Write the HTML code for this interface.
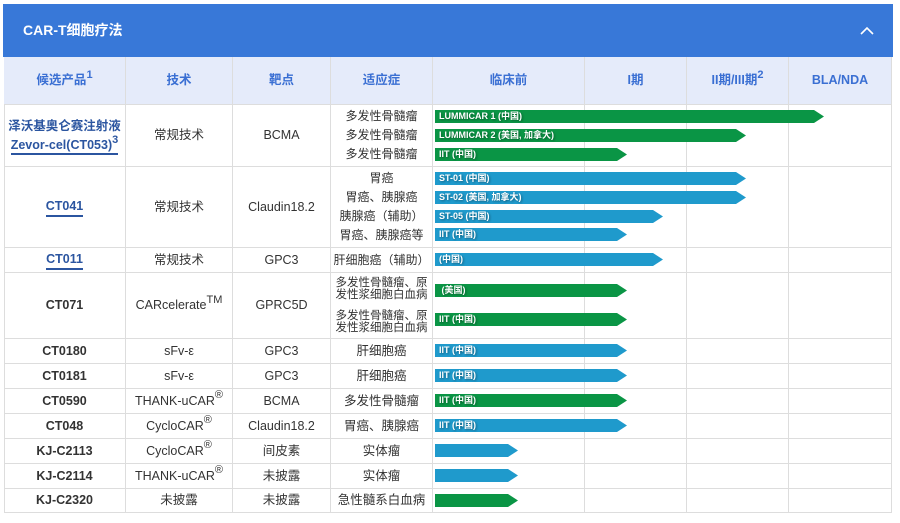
<!DOCTYPE html>
<html><head><meta charset="utf-8"><style>
*{margin:0;padding:0;box-sizing:border-box}
body{width:900px;height:523px;background:#fff;position:relative;overflow:hidden;font-family:"Liberation Sans","Noto Sans CJK SC",sans-serif;color:#333}
.hd{position:absolute;left:3px;top:4px;width:890px;height:53px;background:#3878d8;color:#fff;font-weight:bold;font-size:14px;line-height:53px;padding-left:20px}
.c{position:absolute;display:flex;align-items:center;justify-content:center;text-align:center;font-size:12.5px;border-right:1px solid #ddd;border-bottom:1px solid #ddd;line-height:1.5;white-space:nowrap}
.h{background:#e5ebfa;color:#3a6fd3;font-weight:bold;font-size:12.5px}
.b{font-weight:bold}
.u{color:#2b55a0;font-weight:bold;border-bottom:2px solid #2b55a0;padding-bottom:1px;line-height:16px}
sup{font-size:11px;position:relative;top:-6px;vertical-align:baseline;line-height:0}
.h sup,.u sup{font-weight:bold}
.bar{position:absolute;height:13px;color:#fff;font-size:9px;font-weight:bold;line-height:13px;padding-left:4px;white-space:nowrap;text-shadow:1px 1px 2px rgba(0,0,0,.4);clip-path:polygon(0 0,calc(100% - 10px) 0,100% 50%,calc(100% - 10px) 100%,0 100%)}
.g{background:#0a9545}.bl{background:#1f9acc}
.ind{font-size:12px;line-height:19px}
</style></head><body>
<div class="hd">CAR-T细胞疗法<svg style="position:absolute;right:19px;top:22px" width="14" height="9" viewBox="0 0 14 9"><path d="M1 8 L7 2 L13 8" fill="none" stroke="#fff" stroke-width="1.6"/></svg></div>
<div style="position:absolute;left:4px;top:57px;width:888px;height:456px;border-left:1px solid #ddd"></div>
<div class="c h" style="left:4px;top:57px;width:122px;height:48px">候选产品<sup>1</sup></div>
<div class="c h" style="left:126px;top:57px;width:107px;height:48px">技术</div>
<div class="c h" style="left:233px;top:57px;width:98px;height:48px">靶点</div>
<div class="c h" style="left:331px;top:57px;width:102px;height:48px">适应症</div>
<div class="c h" style="left:433px;top:57px;width:152px;height:48px">临床前</div>
<div class="c h" style="left:585px;top:57px;width:102px;height:48px">I期</div>
<div class="c h" style="left:687px;top:57px;width:102px;height:48px">II期/III期<sup>2</sup></div>
<div class="c h" style="left:789px;top:57px;width:103px;height:48px;border-right:1px solid #ddd">BLA/NDA</div>
<div id="rows"></div>
<script>
const rows=[
 [105,62,'<div style="color:#2b55a0;font-weight:bold;line-height:19px">泽沃基奥仑赛注射液<br><span class="u">Zevor-cel(CT053)<sup>3</sup></span></div>','常规技术','BCMA','<div class="ind">多发性骨髓瘤<br>多发性骨髓瘤<br>多发性骨髓瘤</div>'],
 [167,81,'<span class="u">CT041</span>','常规技术','Claudin18.2','<div class="ind">胃癌<br>胃癌、胰腺癌<br>胰腺癌（辅助）<br>胃癌、胰腺癌等</div>'],
 [248,25,'<span class="u">CT011</span>','常规技术','GPC3','<span style="font-size:12px">肝细胞癌（辅助）</span>'],
 [273,66,'<span class="b">CT071</span>','CARcelerate<sup>TM</sup>','GPRC5D','<div style="line-height:12px;font-size:11.5px;text-align:left">多发性骨髓瘤、原<br>发性浆细胞白血病<div style="height:9px"></div>多发性骨髓瘤、原<br>发性浆细胞白血病</div>'],
 [339,25,'<span class="b">CT0180</span>','sFv-ε','GPC3','肝细胞癌'],
 [364,25,'<span class="b">CT0181</span>','sFv-ε','GPC3','肝细胞癌'],
 [389,25,'<span class="b">CT0590</span>','THANK-uCAR<sup>®</sup>','BCMA','多发性骨髓瘤'],
 [414,25,'<span class="b">CT048</span>','CycloCAR<sup>®</sup>','Claudin18.2','胃癌、胰腺癌'],
 [439,25,'<span class="b">KJ-C2113</span>','CycloCAR<sup>®</sup>','间皮素','实体瘤'],
 [464,25,'<span class="b">KJ-C2114</span>','THANK-uCAR<sup>®</sup>','未披露','实体瘤'],
 [489,24,'<span class="b">KJ-C2320</span>','未披露','未披露','急性髓系白血病']
];
const xs=[[4,122],[126,107],[233,98],[331,102],[433,152],[585,102],[687,102],[789,103]];
let h='';
for(const r of rows){
 for(let i=0;i<8;i++){
  const t=i<4?r[2+i]:'';
  h+=`<div class="c" style="left:${xs[i][0]}px;top:${r[0]}px;width:${xs[i][1]}px;height:${r[1]}px">${t}</div>`;
 }
}
const bars=[
 [110,824,'g','LUMMICAR 1 (中国)'],[129,746,'g','LUMMICAR 2 (美国, 加拿大)'],[148,627,'g','IIT (中国)'],
 [172,746,'bl','ST-01 (中国)'],[191,746,'bl','ST-02 (美国, 加拿大)'],[210,663,'bl','ST-05 (中国)'],[228,627,'bl','IIT (中国)'],
 [253,663,'bl','(中国)'],[284,627,'g','&nbsp;(美国)'],[313,627,'g','IIT (中国)'],
 [344,627,'bl','IIT (中国)'],[369,627,'bl','IIT (中国)'],[394,627,'g','IIT (中国)'],[419,627,'bl','IIT (中国)'],
 [444,518,'bl',''],[469,518,'bl',''],[494,518,'g','']
];
for(const b of bars)h+=`<div class="bar ${b[2]}" style="left:435px;top:${b[0]}px;width:${b[1]-435}px">${b[3]}</div>`;
document.getElementById('rows').innerHTML=h;
</script>
</body></html>
